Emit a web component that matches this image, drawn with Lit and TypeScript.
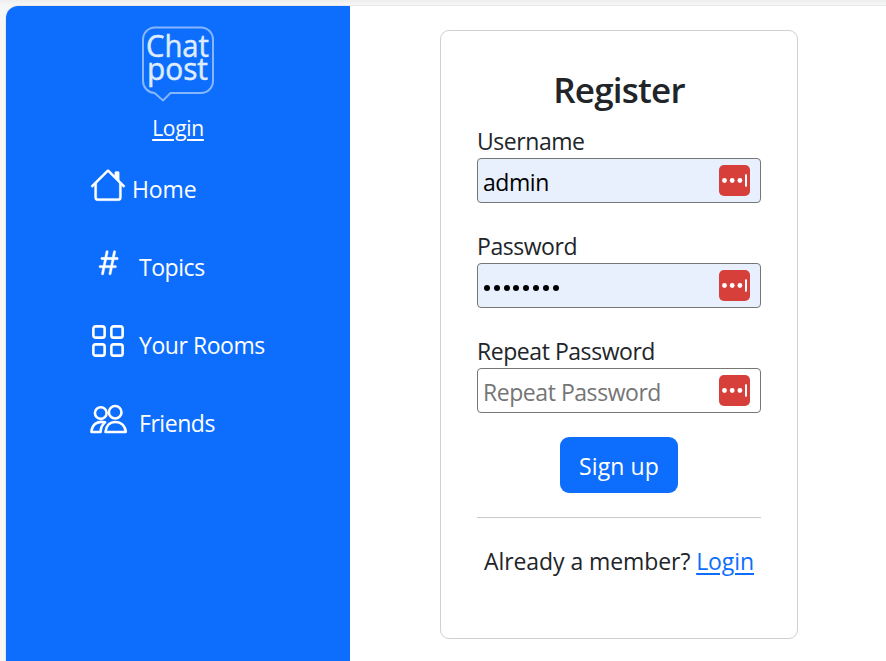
import { LitElement, html, css, svg } from "lit";
import { customElement, property } from "lit/decorators.js";

const icons: Record<string, unknown> = {
  home: svg`<path fill-rule="evenodd" d="M2 13.5V7h1v6.5a.5.5 0 0 0 .5.5h9a.5.5 0 0 0 .5-.5V7h1v6.5a1.5 1.5 0 0 1-1.5 1.5h-9A1.5 1.5 0 0 1 2 13.5zm11-11V6l-2-2V2.5a.5.5 0 0 1 .5-.5h1a.5.5 0 0 1 .5.5z"/><path fill-rule="evenodd" d="M7.293 1.5a1 1 0 0 1 1.414 0l6.647 6.646a.5.5 0 0 1-.708.708L8 2.207 1.354 8.854a.5.5 0 1 1-.708-.708L7.293 1.5z"/>`,
  hash: svg`<path d="M8.39 12.648a1.32 1.32 0 0 0-.015.18c0 .305.21.508.5.508.266 0 .492-.172.555-.477l.554-2.703h1.204c.421 0 .617-.234.617-.547 0-.312-.188-.53-.617-.53h-.985l.516-2.524h1.265c.43 0 .618-.227.618-.547 0-.313-.188-.524-.618-.524h-1.046l.476-2.304a1.06 1.06 0 0 0 .016-.164.51.51 0 0 0-.516-.516.54.54 0 0 0-.539.43l-.523 2.554H7.617l.477-2.304c.008-.04.015-.118.015-.164a.512.512 0 0 0-.523-.516.539.539 0 0 0-.531.43L6.53 5.484H5.414c-.43 0-.617.22-.617.532 0 .312.187.539.617.539h.906l-.515 2.523H4.609c-.421 0-.609.219-.609.531 0 .313.188.547.61.547h.976l-.516 2.492c-.008.04-.015.125-.015.18 0 .305.21.508.5.508.265 0 .492-.172.554-.477l.555-2.703h2.242l-.515 2.492zm-1-6.109h2.266l-.515 2.563H6.859l.532-2.563z"/>`,
  grid: svg`<g fill="none" stroke="currentColor"><rect x="1.500" y="1.500" width="5" height="5" rx="1"/><rect x="9.500" y="1.500" width="5" height="5" rx="1"/><rect x="1.500" y="9.500" width="5" height="5" rx="1"/><rect x="9.500" y="9.500" width="5" height="5" rx="1"/></g>`,
  friends: svg`<g fill="none" stroke="currentColor" stroke-width="1" stroke-linejoin="round"><circle cx="4.8" cy="5.35" r="2.6"/><circle cx="11.200" cy="5" r="2.800"/><path d="M6.900 13.750C7.100 11 8.800 9.300 11.300 9.300s4.400 1.700 4.600 4.450z"/><path d="M6.700 9.450C3.200 8.700.900 10.400.650 13.750H4.700C4.750 11.900 5.400 10.500 6.700 9.450z"/></g>`,
};

@customElement("nav-item")
export class NavItem extends LitElement {
  @property() icon = "home";
  @property() label = "";

  static styles = css`
    :host { display: flex; height: 36px; }
    .icon { width: 36px; height: 36px; flex: none; fill: currentColor; overflow: visible; }
    .icon > path { stroke: currentColor; stroke-width: 0.15; }
    .icon > g { stroke-width: 1.150; }
    .label { line-height: 36px; padding-top: 4px; margin-left: 13px; white-space: nowrap; }
    .label.home { margin-left: 6px; letter-spacing: -0.1px; }
  `;

  render() {
    return html`<svg class="icon" viewBox="0 0 16 16">${icons[this.icon]}</svg
      ><span class="label ${this.icon}">${this.label}</span>`;
  }
}

@customElement("form-field")
export class FormField extends LitElement {
  @property() label = "";
  @property() type = "text";
  @property() value = "";
  @property() placeholder = "";

  static styles = css`
    :host { display: block; height: 81px; }
    .label { display: block; box-sizing: border-box; height: 36px; line-height: 36px; padding-top: 1px; }
    .box { display: flex; align-items: center; box-sizing: border-box; height: 45px; border: 1px solid #767676; border-radius: 4px; background: #fff; padding: 0 10px 0 5px; }
    .box.filled { background: #e8f0fe; }
    .input { flex: 1; min-width: 0; height: 41px; margin-top: 2px; padding: 0; border: 0; outline: 0; background: none; font: inherit; letter-spacing: inherit; color: #000; }
    .input::placeholder { color: #757575; opacity: 1; }
    .dots { flex: 1; display: flex; gap: 3.8px; padding: 5px 0 0 1px; }
    .dot { width: 6px; height: 6px; border-radius: 50%; background: #000; }
    .badge { width: 31px; height: 31px; flex: none; }
  `;

  render() {
    const body =
      this.type === "password" && this.value
        ? html`<div class="dots">${[...this.value].map(() => html`<i class="dot"></i>`)}</div>`
        : html`<input class="input" .value=${this.value} placeholder=${this.placeholder} />`;
    return html`<label class="label">${this.label}</label>
      <div class="box ${this.value ? "filled" : ""}">
        ${body}
        <svg class="badge" viewBox="0 0 31 31">
          <rect width="31" height="31" rx="5" fill="#d73f3b" />
          <g fill="#fff">
            <circle cx="5.500" cy="15.500" r="2.400" />
            <circle cx="13.200" cy="15.500" r="2.400" />
            <circle cx="20.900" cy="15.500" r="2.400" />
            <rect x="26" y="9.300" width="2" height="12.500" rx=".8" />
          </g>
        </svg>
      </div>`;
  }
}

@customElement("app-root")
export class AppRoot extends LitElement {
  static styles = css`
    :host { display: block; box-sizing: border-box; width: 886px; height: 661px; overflow: hidden; background: linear-gradient(#eeeeee, #f5f6f6 5px); padding: 5px 0 0 5px; font-family: "Open Sans", "Noto Sans", sans-serif; font-size: 23px; letter-spacing: -0.45px; color: #212529; }
    .page { display: flex; height: 656px; box-sizing: border-box; border-top: 1px solid #e8e8e8; border-left: 1px solid #e8e8e8; border-top-left-radius: 13px; overflow: hidden; background: #fff; }
    .side { width: 344px; flex: none; background: #0d6efd; color: #fff; display: flex; flex-direction: column; align-items: center; }
    .logo { width: 74px; height: 78px; margin-top: 19px; }
    .login { margin-top: 7px; line-height: 36px; font-size: 21px; letter-spacing: -0.3px; color: #fff; text-underline-offset: 3px; text-decoration-thickness: 1.500px; }
    .nav { align-self: stretch; padding-left: 84px; margin-top: 21px; display: flex; flex-direction: column; gap: 42px; }
    .card { box-sizing: border-box; width: 358px; height: 609px; margin: 24px 0 0 90px; border: 1px solid #d0d0d0; border-radius: 9px; padding: 36px; display: flex; flex-direction: column; }
    .title { margin: 0; font-size: 35px; line-height: 43px; padding-top: 1px; margin-bottom: 11px; font-weight: 600; letter-spacing: -0.8px; text-align: center; }
    .fields { display: flex; flex-direction: column; gap: 24px; }
    .submit { align-self: center; margin-top: 24px; width: 118px; height: 56px; padding: 2px 0 0; border: 0; border-radius: 9px; background: #0d6efd; color: #fff; font: inherit; letter-spacing: 0.1px; }
    .rule { height: 1px; background: #c8c9ca; margin-top: 24px; flex: none; }
    .member { text-align: center; white-space: nowrap; line-height: 36px; margin-top: 25px; letter-spacing: -0.08px; }
    .link { color: #0d6efd; text-underline-offset: 3px; text-decoration-thickness: 1.500px; }
  `;

  render() {
    return html`
      <div class="page">
        <div class="side">
          <svg class="logo" viewBox="0 0 74 78">
            <path d="M14 2.500H60a12 12 0 0 1 12 12V56a12 12 0 0 1-12 12H29.500L22 75.500 13.500 68A12 12 0 0 1 2 56V14.500A12 12 0 0 1 14 2.500z" fill="none" stroke="#86b6fe" stroke-width="2" />
            <text fill="#dfebff" stroke="#dfebff" stroke-width=".5" font-family="Open Sans" font-size="31" letter-spacing="0">
              <tspan x="5" y="32" textLength="63" lengthAdjust="spacingAndGlyphs">Chat</tspan>
              <tspan x="6" y="54.500" textLength="61" lengthAdjust="spacingAndGlyphs">post</tspan>
            </text>
          </svg>
          <a class="login" href="#">Login</a>
          <nav class="nav">
            <nav-item icon="home" label="Home"></nav-item>
            <nav-item icon="hash" label="Topics"></nav-item>
            <nav-item icon="grid" label="Your Rooms"></nav-item>
            <nav-item icon="friends" label="Friends"></nav-item>
          </nav>
        </div>
        <div class="card">
          <h1 class="title">Register</h1>
          <div class="fields">
            <form-field label="Username" value="admin"></form-field>
            <form-field label="Password" type="password" value="password"></form-field>
            <form-field label="Repeat Password" type="password" placeholder="Repeat Password"></form-field>
          </div>
          <button class="submit">Sign up</button>
          <div class="rule"></div>
          <div class="member">Already a member? <a class="link" href="#">Login</a></div>
        </div>
      </div>
    `;
  }
}
